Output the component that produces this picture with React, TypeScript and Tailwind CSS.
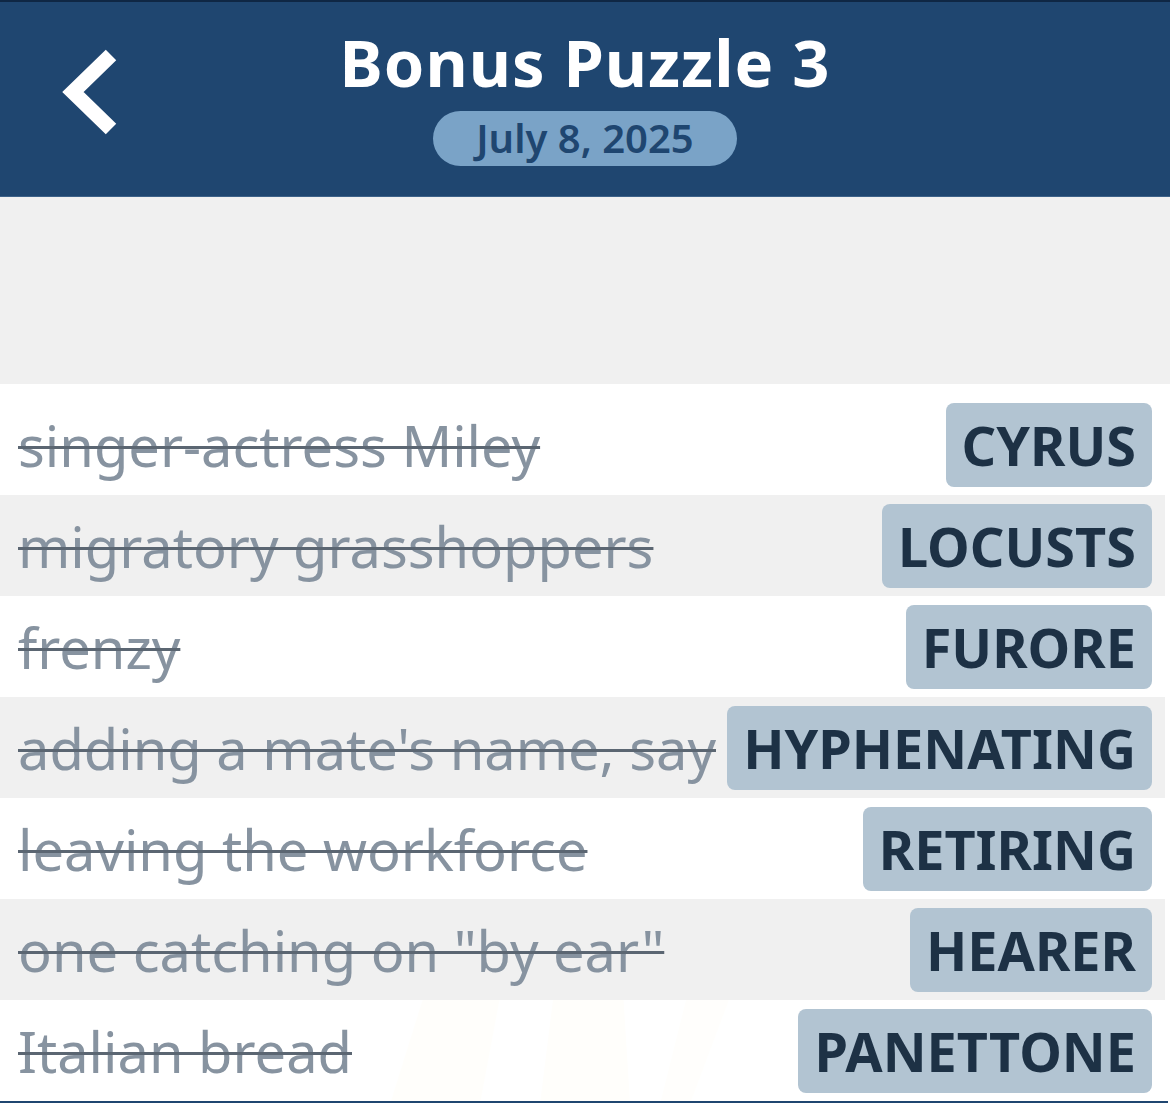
import React from 'react';

// Solved clue list for a bonus puzzle
interface Clue {
  clue: string;
  answer: string;
}

const clues: Clue[] = [
  { clue: 'singer-actress Miley', answer: 'CYRUS' },
  { clue: 'migratory grasshoppers', answer: 'LOCUSTS' },
  { clue: 'frenzy', answer: 'FURORE' },
  { clue: "adding a mate's name, say", answer: 'HYPHENATING' },
  { clue: 'leaving the workforce', answer: 'RETIRING' },
  { clue: 'one catching on "by ear"', answer: 'HEARER' },
  { clue: 'Italian bread', answer: 'PANETTONE' },
];

const BackChevron = () => (
  <svg width="60" height="92" viewBox="0 0 60 92" className="block">
    <path d="M52 9 L14 46 L52 83" fill="none" stroke="#ffffff" strokeWidth="15" strokeLinejoin="miter" />
  </svg>
);

const App: React.FC = () => {
  return (
    <div className="w-[1170px] h-[1103px] overflow-hidden bg-white font-['Noto_Sans',sans-serif] relative">
      {/* Header */}
      <div className="border-t-2 border-[#0f2744] bg-[#1f4670] h-[197px] relative border-b border-b-[#3d6289]">
        <div className="absolute left-[59px] top-[44px]">
          <BackChevron />
        </div>
        <div className="flex flex-col items-center pt-[14px]">
          <h1 className="text-white font-bold text-[65px] leading-[92px] tracking-[1px]">Bonus Puzzle 3</h1>
          <div className="mt-[3px] h-[55px] w-[304px] rounded-full bg-[#7aa3c7] flex items-center justify-center">
            <span className="text-[#1f4670] font-semibold text-[40px] leading-none -mt-[1px]">July 8, 2025</span>
          </div>
        </div>
      </div>

      {/* Empty area above list */}
      <div className="h-[187px] bg-[#f0f0f0]" />

      {/* Clue list */}
      <div className="relative pt-[10px] pr-[5px]">
        <svg className="absolute left-[330px] top-[560px] pointer-events-none" width="420" height="160" viewBox="0 0 420 160">
          <polygon points="60,160 110,0 180,0 150,160" fill="#fff6d6" opacity="0.45" />
          <polygon points="210,160 230,0 290,0 300,160" fill="#fff3c8" opacity="0.4" />
          <polygon points="330,160 370,0 420,0 360,160" fill="#fff6d6" opacity="0.35" />
        </svg>
        {clues.map((c, i) => (
          <div
            key={c.answer}
            className={`relative h-[101px] flex items-center justify-between pl-[18px] pr-[13px] ${
              i % 2 === 1 ? 'bg-[#f0f0f0]' : 'bg-white/80'
            }`}
          >
            <span className="text-[#8793a0] text-[56px] leading-none line-through decoration-[#5b6672] decoration-[3px] whitespace-nowrap">
              {c.clue}
            </span>
            <span className="ml-[6px] shrink-0 h-[84px] px-[16px] rounded-[8px] bg-[#b2c4d2] flex items-center text-[#1d3145] font-bold text-[54px] leading-none whitespace-nowrap">
              {c.answer}
            </span>
          </div>
        ))}
      </div>

      <div className="absolute left-0 right-[2px] bottom-0 h-[2px] bg-[#1f4670]" />
    </div>
  );
};

export default App;
